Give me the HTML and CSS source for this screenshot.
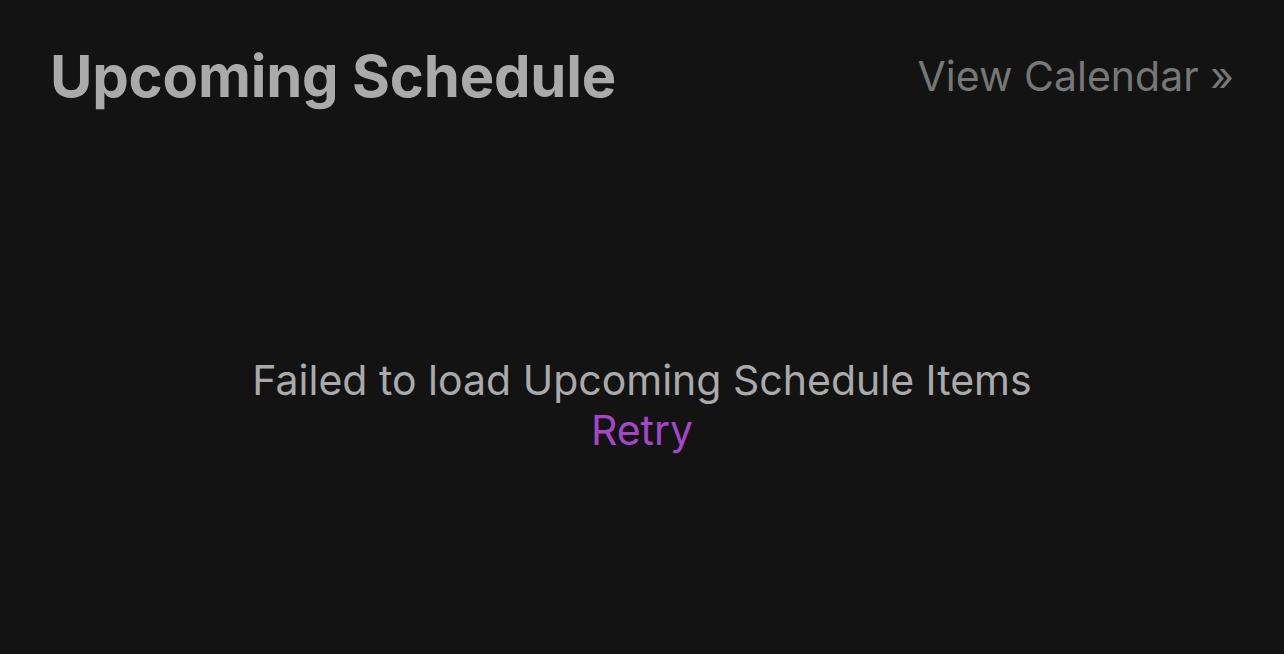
FILE: index.html
```html
<!DOCTYPE html>
<html>
<head>
<meta charset="utf-8">
<link rel="stylesheet" href="styles.css">
</head>
<body>
<div class="page">
  <header class="header">
    <h1 class="title">Upcoming Schedule</h1>
    <a class="view-link">View Calendar »</a>
  </header>
  <section class="status">
    <p class="message">Failed to load Upcoming Schedule Items</p>
    <a class="retry">Retry</a>
  </section>
</div>
</body>
</html>
```
FILE: styles.css
```css
html, body {
  margin: 0;
  padding: 0;
  background: #131313;
  height: 100%;
}
.page {
  font-family: Inter, "Noto Sans", sans-serif;
  height: 654px;
  display: flex;
  flex-direction: column;
  padding: 0 50px 0 50px;
  box-sizing: border-box;
}
.header {
  display: flex;
  justify-content: space-between;
  align-items: center;
  padding-top: 40px;
  height: 72px;
}
.title {
  margin: 0;
  font-size: 58px;
  line-height: 72px;
  font-weight: 700;
  color: #aaaaaa;
  letter-spacing: -0.2px;
}
.view-link {
  font-size: 41px;
  line-height: 50px;
  color: #777777;
}
.status {
  display: flex;
  flex-direction: column;
  align-items: center;
  margin-top: 243px;
}
.message {
  margin: 0;
  font-size: 41px;
  color: #aaaaaa;
  line-height: 50px;
}
.retry {
  font-size: 41px;
  line-height: 50px;
  color: #a546c8;
}
```
